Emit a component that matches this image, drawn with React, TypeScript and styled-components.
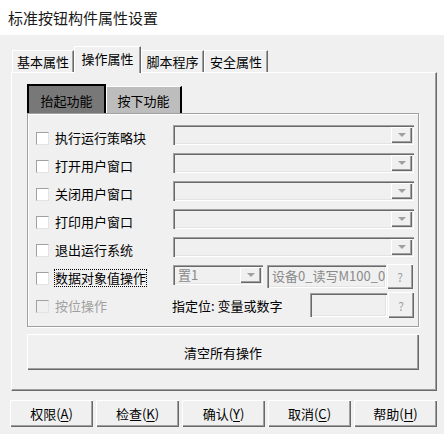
import React from 'react'
import styled, { createGlobalStyle } from 'styled-components'

const GlobalStyle = createGlobalStyle`
  html, body {
    margin: 0;
    padding: 0;
    background: #f0f0f0;
  }
  body {
    font-family: "Noto Sans CJK SC", "DejaVu Sans", sans-serif;
    font-size: 13px;
    color: #000;
  }
`

const tabs = ['基本属性', '操作属性', '脚本程序', '安全属性']
const tabWidths = [62, 67, 63, 64]

const rows = ['执行运行策略块', '打开用户窗口', '关闭用户窗口', '打印用户窗口', '退出运行系统']

const footer = [
  { label: '权限', key: 'A' },
  { label: '检查', key: 'K' },
  { label: '确认', key: 'Y' },
  { label: '取消', key: 'C' },
  { label: '帮助', key: 'H' },
]

const App = () => {
  return (
    <Window>
      <GlobalStyle />
      <TitleBar>标准按钮构件属性设置</TitleBar>
      <Body>
        <TabStrip>
          {tabs.map((t, i) => (
            <Tab key={t} $active={i === 1} $w={tabWidths[i]}>{t}</Tab>
          ))}
        </TabStrip>
        <Panel>
          <SubTabs>
            <SubTab $down>抬起功能</SubTab>
            <SubTab>按下功能</SubTab>
          </SubTabs>
          <Group>
            {rows.map((r) => (
              <Row key={r}>
                <CheckCell>
                  <Check />
                  <Label>{r}</Label>
                </CheckCell>
                <Combo $w={241}>
                  <DropBtn><Arrow /></DropBtn>
                </Combo>
              </Row>
            ))}
            <Row>
              <CheckCell>
                <Check />
                <Label $focus>数据对象值操作</Label>
              </CheckCell>
              <Combo $w={90}>
                <ComboText>置1</ComboText>
                <DropBtn><Arrow /></DropBtn>
              </Combo>
              <Field $w={119} $h={23}>设备0_读写M100_0</Field>
              <AskBtn $h={25} $top={0}>?</AskBtn>
            </Row>
            <Row>
              <CheckCell>
                <Check $disabled />
                <Label $disabled>按位操作</Label>
              </CheckCell>
              <PlainText>指定位: 变量或数字</PlainText>
              <Spacer />
              <Field $w={77} $h={24} $top={1} />
              <AskBtn $h={26} $top={0}>?</AskBtn>
            </Row>
          </Group>
          <ClearBtn>清空所有操作</ClearBtn>
        </Panel>
        <Footer>
          {footer.map((b) => (
            <FootBtn key={b.key}>
              {b.label}(<u>{b.key}</u>)
            </FootBtn>
          ))}
        </Footer>
      </Body>
    </Window>
  )
}

export default App

const Window = styled.div`
  width: 444px;
  height: 434px;
  background: #f0f0f0;
  overflow: hidden;
`
const TitleBar = styled.div`
  height: 35px;
  background: #fff;
  display: flex;
  align-items: center;
  padding-left: 8px;
  font-size: 15px;
  color: #1a1a1a;
  padding-bottom: 1px;
  box-sizing: border-box;
`
const Body = styled.div`
  padding: 11px 7px 0 10px;
`
const TabStrip = styled.div`
  display: flex;
  align-items: flex-end;
  height: 26px;
  padding-left: 2px;
`
const Tab = styled.div<{ $active?: boolean; $w: number }>`
  width: ${(p) => p.$w}px;
  height: ${(p) => (p.$active ? 27 : 22)}px;
  box-sizing: border-box;
  display: flex;
  align-items: center;
  justify-content: center;
  background: #f0f0f0;
  border-top: 1px solid #fff;
  border-left: 1px solid #fff;
  border-right: 1px solid #696969;
  box-shadow: inset -1px 0 #a0a0a0;
  margin-bottom: ${(p) => (p.$active ? -1 : 0)}px;
  position: relative;
  z-index: ${(p) => (p.$active ? 2 : 1)};
  padding-bottom: ${(p) => (p.$active ? 3 : 0)}px;
`
const Panel = styled.div`
  margin-left: 1px;
  width: 426px;
  box-sizing: border-box;
  border-top: 1px solid #fff;
  border-left: 1px solid #fff;
  border-right: 1px solid #696969;
  border-bottom: 1px solid #696969;
  box-shadow: inset -1px -1px #a0a0a0;
  padding: 12px 17px 20px 15px;
`
const SubTabs = styled.div`
  display: flex;
  align-items: flex-end;
  height: 28px;
`
const SubTab = styled.div<{ $down?: boolean }>`
  height: ${(p) => (p.$down ? 29 : 27)}px;
  width: ${(p) => (p.$down ? 79 : 76)}px;
  box-sizing: border-box;
  display: flex;
  align-items: center;
  justify-content: center;
  background: ${(p) => (p.$down ? '#787878' : '#bdbdbd')};
  border: 2px solid #000;
  border-bottom: none;
  ${(p) => (p.$down ? '' : 'border-left: 1px solid #fff; border-top: 1px solid #fff;')}
  position: relative;
  z-index: 2;
  padding-top: 1px;
`
const Group = styled.div`
  border: 1px solid #a0a0a0;
  box-shadow: inset 1px 1px #fff, 1px 1px #fff;
  padding: 10px 4px 6px 8px;
  display: flex;
  flex-direction: column;
`
const Row = styled.div`
  display: flex;
  align-items: flex-start;
  height: 28px;
`
const CheckCell = styled.div`
  width: 137px;
  display: flex;
  align-items: center;
  gap: 6px;
  height: 28px;
  flex-shrink: 0;
`
const Check = styled.div<{ $disabled?: boolean }>`
  width: 13px;
  height: 13px;
  box-sizing: border-box;
  background: ${(p) => (p.$disabled ? '#f0f0f0' : '#fff')};
  border-top: 1px solid #a0a0a0;
  border-left: 1px solid #a0a0a0;
  border-right: 1px solid #e3e3e3;
  border-bottom: 1px solid #e3e3e3;
  margin-top: 1px;
`
const Label = styled.span<{ $disabled?: boolean; $focus?: boolean }>`
  color: ${(p) => (p.$disabled ? '#a0a0a0' : '#000')};
  white-space: nowrap;
  line-height: 16px;
  ${(p) => (p.$focus ? 'outline: 1px dotted #000; outline-offset: 0px;' : '')}
`
const Combo = styled.div<{ $w: number }>`
  width: ${(p) => p.$w}px;
  height: 20px;
  margin-top: 1px;
  box-sizing: border-box;
  display: flex;
  align-items: stretch;
  background: #f0f0f0;
  box-shadow: inset 1px 1px #a0a0a0, inset 2px 2px #696969, inset -1px -1px #fff, inset -2px -2px #e3e3e3;
  padding: 2px 2px 2px 2px;
  flex-shrink: 0;
`
const ComboText = styled.span`
  flex: 1;
  color: #8a8a8a;
  line-height: 16px;
  padding-left: 3px;
`
const DropBtn = styled.div`
  margin-left: auto;
  width: 21px;
  box-sizing: border-box;
  background: #f0f0f0;
  box-shadow: inset 1px 1px #fff, inset -1px -1px #696969, inset -2px -2px #a0a0a0;
  display: flex;
  align-items: center;
  justify-content: center;
`
const Arrow = styled.div`
  width: 0;
  height: 0;
  border-left: 4px solid transparent;
  border-right: 4px solid transparent;
  border-top: 4px solid #a0a0a0;
`
const Field = styled.div<{ $w: number; $h: number; $top?: number }>`
  width: ${(p) => p.$w}px;
  height: ${(p) => p.$h}px;
  margin-top: ${(p) => p.$top ?? 1}px;
  margin-left: 4px;
  box-sizing: border-box;
  background: #f0f0f0;
  box-shadow: inset 1px 1px #a0a0a0, inset 2px 2px #696969, inset -1px -1px #fff, inset -2px -2px #e3e3e3;
  color: #8a8a8a;
  padding: 3px 0 0 5px;
  line-height: 16px;
  white-space: nowrap;
  overflow: hidden;
  flex-shrink: 0;
`
const AskBtn = styled.div<{ $h: number; $top: number }>`
  width: 26px;
  height: ${(p) => p.$h}px;
  margin-top: ${(p) => p.$top}px;
  margin-left: 1px;
  box-sizing: border-box;
  background: #f0f0f0;
  box-shadow: inset 1px 1px #fff, inset -1px -1px #696969, inset -2px -2px #a0a0a0;
  display: flex;
  align-items: center;
  justify-content: center;
  color: #a0a0a0;
  font-size: 12px;
  flex-shrink: 0;
`
const PlainText = styled.span`
  margin-left: -1px;
  line-height: 28px;
  white-space: nowrap;
`
const Spacer = styled.div`
  flex: 1;
`
const ClearBtn = styled.div`
  margin-top: 7px;
  height: 36px;
  box-sizing: border-box;
  background: #f0f0f0;
  box-shadow: inset 1px 1px #fff, inset -1px -1px #696969, inset -2px -2px #a0a0a0;
  display: flex;
  align-items: center;
  justify-content: center;
`
const Footer = styled.div`
  display: flex;
  gap: 3px;
  margin-top: 9px;
`
const FootBtn = styled.div`
  width: 83px;
  height: 27px;
  box-sizing: border-box;
  background: #f0f0f0;
  box-shadow: inset 1px 1px #fff, inset -1px -1px #696969, inset -2px -2px #a0a0a0;
  display: flex;
  align-items: center;
  justify-content: center;
  font-size: 13px;
  u {
    text-underline-offset: 2px;
  }
`
